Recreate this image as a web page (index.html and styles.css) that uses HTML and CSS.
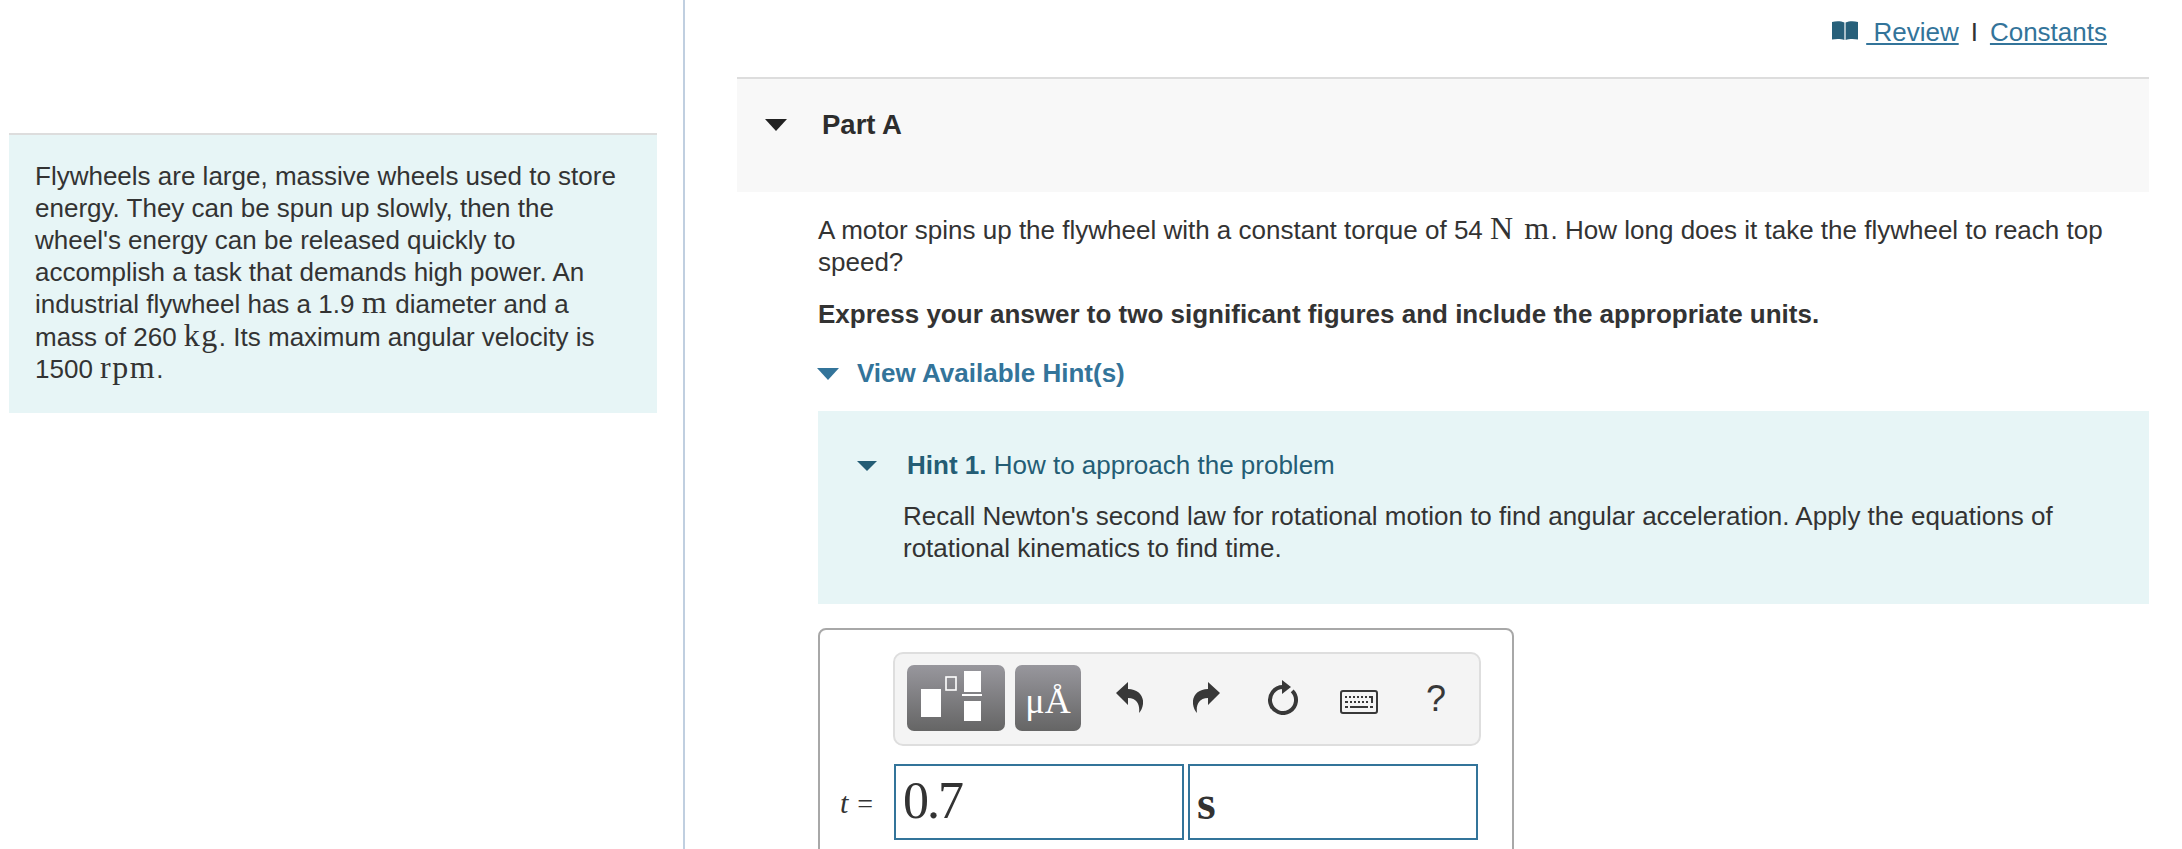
FILE: index.html
```html
<!DOCTYPE html>
<html lang="en">
<head>
<meta charset="utf-8">
<title>Part A</title>
<link rel="stylesheet" href="styles.css">
</head>
<body>
<div class="page">
  <aside class="left">
    <div class="intro">Flywheels are large, massive wheels used to store energy. They can be spun up slowly, then the wheel's energy can be released quickly to accomplish a task that demands high power. An industrial flywheel has a 1.9 <span class="math">m</span> diameter and a mass of 260 <span class="math math-tall">kg</span>. Its maximum angular velocity is 1500 <span class="math">rpm</span>.</div>
  </aside>
  <main class="right">
    <nav class="top">
      <svg class="book" viewBox="0 0 26 20"><path d="M0 1 C4 0 9 0 12.4 1.5 V19 C9 17.6 4 17.6 0 18.5 Z M13.6 1.5 C17 0 22 0 26 1 V18.5 C22 17.6 17 17.6 13.6 19 Z"/></svg>
      <a class="link" href="#">&nbsp;Review</a><span class="sep">I</span><a class="link" href="#">Constants</a>
    </nav>
    <section class="part">
      <header class="part-head">
        <span class="tri tri-dark"></span>
        <h2 class="part-title">Part A</h2>
      </header>
      <div class="part-body">
        <p class="para">A motor spins up the flywheel with a constant torque of 54 <span class="math">N m</span>. How long does it take the flywheel to reach top speed?</p>
        <p class="para bold">Express your answer to two significant figures and include the appropriate units.</p>
        <div class="hint-toggle"><span class="tri tri-blue"></span><span>View Available Hint(s)</span></div>
        <div class="hint-box">
          <div class="hint-head"><span class="tri tri-teal"></span><span class="hint-title"><b>Hint 1.</b> How to approach the problem</span></div>
          <p class="hint-text">Recall Newton's second law for rotational motion to find angular acceleration. Apply the equations of rotational kinematics to find time.</p>
        </div>
        <div class="answer">
          <div class="toolbar">
            <div class="btn btn-wide">
              <svg class="tpl" viewBox="0 0 98 66"><rect x="14" y="24" width="20" height="28" fill="#fff"/><rect x="39" y="12" width="10" height="13" fill="none" stroke="#fff" stroke-width="1.6"/><rect x="57" y="6" width="17" height="21" fill="#fff"/><rect x="55" y="29" width="20" height="2" fill="#fff"/><rect x="57" y="36" width="17" height="20" fill="#fff"/></svg>
            </div>
            <div class="btn btn-unit">μÅ</div>
            <svg class="ico undo" viewBox="0 0 27 31"><path d="M0 11 L12 0 V7 C22 7 28 14 27 22 C26.5 26 25 29 23 31 C24 24 22 16 12 16 V23 Z"/></svg>
            <svg class="ico redo" viewBox="0 0 27 31"><path d="M27 11 L15 0 V7 C5 7 -1 14 0 22 C.5 26 2 29 4 31 C3 24 5 16 15 16 V23 Z"/></svg>
            <svg class="ico reload" viewBox="0 0 32 36"><path d="M25.2 11.8 A13 13 0 1 1 16 8" fill="none" stroke="#383838" stroke-width="4"/><path d="M15 1 L24 8 L15 15 Z"/></svg>
            <svg class="ico keys" viewBox="0 0 38 24"><rect x="1" y="1" width="36" height="22" rx="2" fill="#f4f4f4" stroke="#383838" stroke-width="2"/><path d="M5 6h2v2H5zM9 6h2v2H9zM13 6h2v2h-2zM17 6h2v2h-2zM21 6h2v2h-2zM25 6h2v2h-2zM29 6h4v7h-2V8h-2zM5 11h3v2H5zM10 11h2v2h-2zM14 11h2v2h-2zM18 11h2v2h-2zM22 11h2v2h-2zM26 11h2v2h-2zM5 16h3v2H5zM10 16h18v2H10zM30 16h3v2h-3z"/></svg>
            <span class="help">?</span>
          </div>
          <div class="inputs">
            <span class="label"><i>t</i> <span class="eq">=</span></span>
            <div class="field field-value">0.7</div>
            <div class="field field-unit">s</div>
          </div>
        </div>
      </div>
    </section>
  </main>
</div>
</body>
</html>
```
FILE: styles.css
```css
* { box-sizing: border-box; }
html, body { margin: 0; padding: 0; background: #fff; }
body {
  height: 849px;
  overflow: hidden;
  font-family: "Liberation Sans", Arial, sans-serif;
  font-size: 26px;
  line-height: 32px;
  color: #333;
}
.page { display: flex; height: 849px; width: 2182px; }
.left {
  width: 685px;
  flex: none;
  border-right: 2px solid #c0cfe0;
  padding: 133px 26px 0 9px;
}
.intro {
  background: #e7f5f6;
  border-top: 2px solid #dddddd;
  padding: 25px 20px 28px 26px;
}
.math {
  font-family: "Liberation Serif", serif;
  font-size: 32px;
  line-height: 24px;
  letter-spacing: 1.5px;
}
.math-tall { line-height: 31px; }
.right { flex: 1; min-width: 0; }
.top {
  height: 77px;
  padding: 16px 75px 0 0;
  display: flex;
  justify-content: flex-end;
  align-items: flex-start;
  color: #333;
}
.book { width: 26px; height: 20px; margin: 5px 8px 0 0; fill: #27607a; }
.link { color: #33749a; text-decoration: underline; }
.sep { margin: 0 12px; }
.part { margin: 0 33px 0 52px; }
.part-head {
  height: 115px;
  background: #f8f8f8;
  border-top: 2px solid #dddddd;
  padding: 30px 0 0 28px;
  display: flex;
  align-items: flex-start;
}
.part-title { margin: 0 0 0 35px; font-size: 27.5px; line-height: 32px; font-weight: 700; color: #2d2d2d; }
.tri { display: block; flex: none; width: 0; height: 0; border-style: solid; border-color: transparent; border-bottom-width: 0; }
.tri-dark { border-width: 12px 11px 0; border-top-color: #222; margin-top: 10px; }
.tri-blue { border-width: 12px 11px 0; border-top-color: #33749a; margin-top: 11px; }
.tri-teal { border-width: 10px 10px 0; border-top-color: #245d75; margin-top: 12px; }
.part-body { padding: 22px 0 0 81px; }
.para { margin: 0 0 20px; }
.bold { font-weight: 700; margin-bottom: 27px; }
.hint-toggle { display: flex; color: #33749a; font-weight: 700; }
.hint-toggle .tri { margin-left: -1px; margin-right: 18px; }
.hint-box {
  margin-top: 22px;
  background: #e7f5f6;
  padding: 38px 40px 40px 39px;
}
.hint-head { display: flex; color: #245d75; }
.hint-head .tri { margin-right: 30px; }
.hint-text { margin: 19px 0 0 46px; }
.answer {
  margin: 24px 0 0 0;
  width: 696px;
  height: 260px;
  border: 2px solid #a8a8a8;
  border-radius: 8px;
  padding: 22px 0 0 73px;
}
.toolbar {
  width: 588px;
  height: 94px;
  background: #f4f4f4;
  border: 2px solid #dedede;
  border-radius: 10px;
  padding: 11px 0 0 12px;
  display: flex;
  align-items: flex-start;
}
.btn {
  height: 66px;
  border-radius: 7px;
  background: linear-gradient(#98979d, #656565);
  color: #fff;
}
.btn-wide { width: 98px; margin-right: 10px; }
.tpl { display: block; width: 98px; height: 66px; }
.btn-unit {
  width: 66px;
  font-family: "Liberation Serif", serif;
  font-size: 36px;
  line-height: 66px;
  padding-top: 3px;
  text-align: center;
}
.ico { display: block; flex: none; fill: #383838; }
.undo { width: 27px; height: 31px; margin: 17px 0 0 35px; }
.redo { width: 27px; height: 31px; margin: 17px 0 0 50px; }
.reload { width: 32px; height: 36px; margin: 14px 0 0 47px; }
.keys { width: 38px; height: 24px; margin: 25px 0 0 41px; }
.help { margin: 14px 0 0 48px; font-size: 36px; line-height: 40px; color: #383838; }
.inputs { display: flex; margin: 18px 0 0 -74px; align-items: flex-start; }
.label { width: 75px; flex: none; padding: 23px 0 0 0; line-height: 32px; font-family: "Liberation Serif", serif; font-size: 28px; text-align: center; }
.label i { font-size: 30px; }
.eq { margin-left: 2px; }
.field {
  height: 76px;
  width: 290px;
  border: 2px solid #33749a;
  font-family: "Liberation Serif", serif;
  font-size: 52px;
  letter-spacing: -2px;
  line-height: 70px;
  padding-left: 7px;
  color: #333;
}
.field-unit { margin-left: 4px; width: 290px; font-size: 48px; font-weight: 700; letter-spacing: 0; line-height: 74px; }
```
